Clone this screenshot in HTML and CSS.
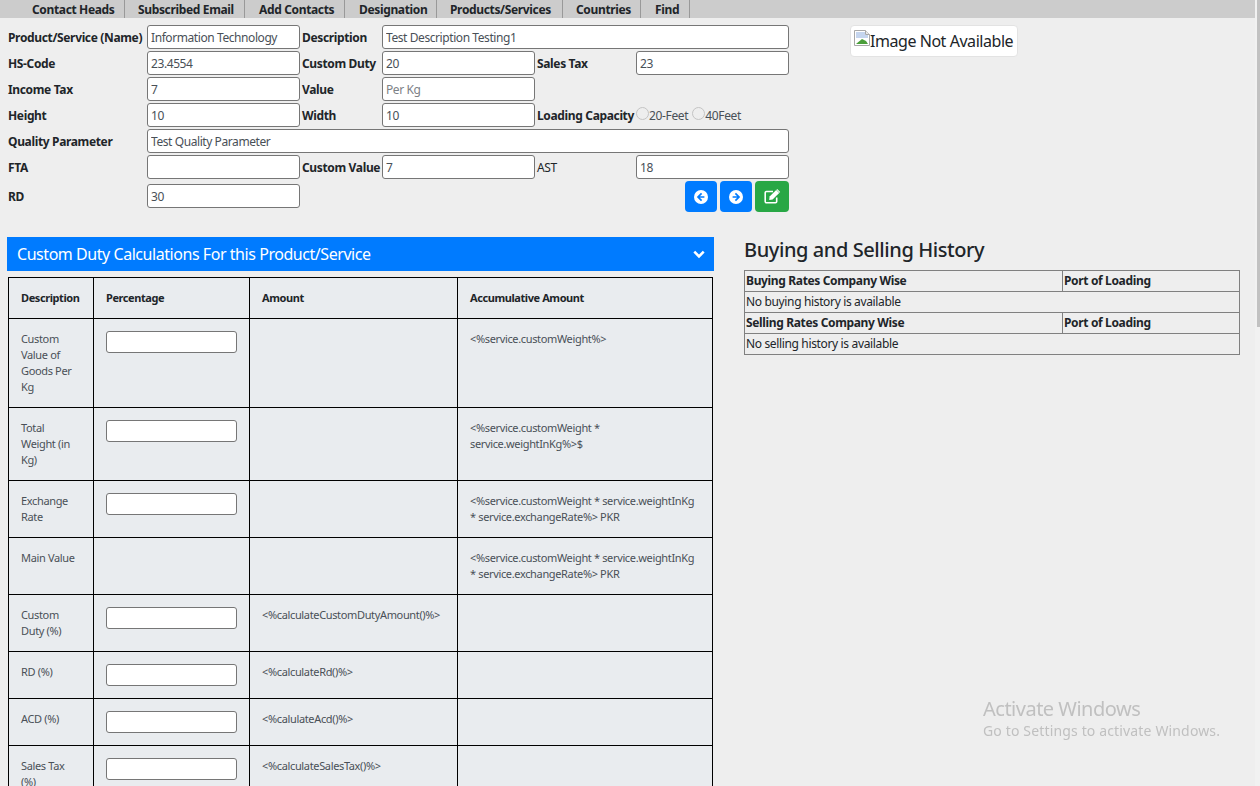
FILE: index.html
```html
<!DOCTYPE html>
<html lang="en">
<head>
    <meta charset="UTF-8">
    <meta name="viewport" content="width=device-width, initial-scale=1.0">
    <title>Product / Service</title>
    <link rel="stylesheet" href="styles.css">
</head>
<body>
    <nav class="tabs">
        <a class="tab tab-contact">Contact Heads</a>
        <a class="tab tab-email">Subscribed Email</a>
        <a class="tab tab-add">Add Contacts</a>
        <a class="tab tab-designation">Designation</a>
        <a class="tab tab-products">Products/Services</a>
        <a class="tab tab-countries">Countries</a>
        <a class="tab tab-find">Find</a>
    </nav>

    <section class="top">
        <form class="product-form">
            <label class="lbl">Product/Service (Name)</label>
            <input class="field" type="text" value="Information Technology">
            <label class="lbl">Description</label>
            <input class="field span-3" type="text" value="Test Description Testing1">

            <label class="lbl">HS-Code</label>
            <input class="field" type="text" value="23.4554">
            <label class="lbl">Custom Duty</label>
            <input class="field" type="text" value="20">
            <label class="lbl">Sales Tax</label>
            <input class="field" type="text" value="23">

            <label class="lbl">Income Tax</label>
            <input class="field" type="text" value="7">
            <label class="lbl">Value</label>
            <input class="field" type="text" placeholder="Per Kg">
            <span class="span-2"></span>

            <label class="lbl">Height</label>
            <input class="field" type="text" value="10">
            <label class="lbl">Width</label>
            <input class="field" type="text" value="10">
            <div class="capacity span-2">
                <label class="lbl">Loading Capacity</label>
                <span class="radio"></span><span class="radio-text">20-Feet</span>
                <span class="radio radio-second"></span><span class="radio-text">40Feet</span>
            </div>

            <label class="lbl">Quality Parameter</label>
            <input class="field span-5" type="text" value="Test Quality Parameter">

            <label class="lbl">FTA</label>
            <input class="field" type="text">
            <label class="lbl">Custom Value</label>
            <input class="field" type="text" value="7">
            <label class="lbl lbl-plain">AST</label>
            <input class="field" type="text" value="18">

            <label class="lbl lbl-rd">RD</label>
            <input class="field field-rd" type="text" value="30">
            <div class="actions">
                <button class="btn btn-blue" type="button">
                    <svg width="14" height="14" viewBox="0 0 14 14"><circle cx="7" cy="7" r="7" fill="#fff"/><path d="M7.600 3.400 4 7l3.600 3.600M4.400 7h6" fill="none" stroke="#007bff" stroke-width="1.700"/></svg>
                </button>
                <button class="btn btn-blue" type="button">
                    <svg width="14" height="14" viewBox="0 0 14 14"><circle cx="7" cy="7" r="7" fill="#fff"/><path d="M6.400 3.400 10 7l-3.600 3.600M9.600 7h-6" fill="none" stroke="#007bff" stroke-width="1.700"/></svg>
                </button>
                <button class="btn btn-green" type="button">
                    <svg width="17" height="15" viewBox="0 0 17 15"><path d="M9 2.500H2.500A1.200 1.200 0 0 0 1.200 3.700v8.900a1.200 1.200 0 0 0 1.300 1.200h9a1.200 1.200 0 0 0 1.200-1.200V8.500" fill="none" stroke="#fff" stroke-width="1.600"/><path d="M5.600 7.600 12.200 1l3 3-6.600 6.600-3.400.4z" fill="#fff"/><path d="M13.200 0l3 3-.7.700-3-3z" fill="#fff"/></svg>
                </button>
            </div>
        </form>

        <div class="image-box">
            <svg class="broken" width="16" height="16" viewBox="0 0 16 16"><path d="M.5.5h11l4 4v11H.5z" fill="#fff" stroke="#a8a8a8"/><path d="M2 2h9v3h3v3H2z" fill="#c5d5ee"/><path d="M2 14l6-5 4 2 2 3z" fill="#4a9e3a"/><path d="M11.500.5v4h4" fill="#e8e8e8" stroke="#a8a8a8"/></svg><span>Image Not Available</span>
        </div>
    </section>

    <section class="bottom">
        <div class="duty">
            <div class="duty-head">
                <span>Custom Duty Calculations For this Product/Service</span>
                <svg width="12" height="9" viewBox="0 0 12 9"><path d="M1.300 1.700 6 6.400l4.700-4.700" fill="none" stroke="#fff" stroke-width="2.600"/></svg>
            </div>
            <table class="duty-table">
                <colgroup>
                    <col class="c1"><col class="c2"><col class="c3"><col class="c4">
                </colgroup>
                <thead>
                    <tr>
                        <th>Description</th>
                        <th>Percentage</th>
                        <th>Amount</th>
                        <th>Accumulative Amount</th>
                    </tr>
                </thead>
                <tbody>
                    <tr>
                        <td>Custom<br>Value of<br>Goods Per<br>Kg</td>
                        <td><input class="pct" type="text"></td>
                        <td></td>
                        <td>&lt;%service.customWeight%&gt;</td>
                    </tr>
                    <tr>
                        <td>Total<br>Weight (in<br>Kg)</td>
                        <td><input class="pct" type="text"></td>
                        <td></td>
                        <td>&lt;%service.customWeight *<br>service.weightInKg%&gt;$</td>
                    </tr>
                    <tr>
                        <td>Exchange<br>Rate</td>
                        <td><input class="pct" type="text"></td>
                        <td></td>
                        <td>&lt;%service.customWeight * service.weightInKg<br>* service.exchangeRate%&gt; PKR</td>
                    </tr>
                    <tr>
                        <td>Main Value<br>&nbsp;</td>
                        <td></td>
                        <td></td>
                        <td>&lt;%service.customWeight * service.weightInKg<br>* service.exchangeRate%&gt; PKR</td>
                    </tr>
                    <tr>
                        <td>Custom<br>Duty (%)</td>
                        <td><input class="pct" type="text"></td>
                        <td>&lt;%calculateCustomDutyAmount()%&gt;</td>
                        <td></td>
                    </tr>
                    <tr>
                        <td>RD (%)</td>
                        <td><input class="pct" type="text"></td>
                        <td>&lt;%calculateRd()%&gt;</td>
                        <td></td>
                    </tr>
                    <tr>
                        <td>ACD (%)</td>
                        <td><input class="pct" type="text"></td>
                        <td>&lt;%calulateAcd()%&gt;</td>
                        <td></td>
                    </tr>
                    <tr>
                        <td>Sales Tax<br>(%)</td>
                        <td><input class="pct" type="text"></td>
                        <td>&lt;%calculateSalesTax()%&gt;</td>
                        <td></td>
                    </tr>
                </tbody>
            </table>
        </div>

        <div class="history">
            <h2>Buying and Selling History</h2>
            <table class="history-table">
                <tr>
                    <th class="h-first">Buying Rates Company Wise</th>
                    <th>Port of Loading</th>
                </tr>
                <tr><td colspan="2">No buying history is available</td></tr>
                <tr>
                    <th class="h-first">Selling Rates Company Wise</th>
                    <th>Port of Loading</th>
                </tr>
                <tr><td colspan="2">No selling history is available</td></tr>
            </table>
        </div>
    </section>

    <div class="scrollbar"><div class="thumb"></div></div>

    <div class="watermark">
        <div class="wm-title">Activate Windows</div>
        <div class="wm-sub">Go to Settings to activate Windows.</div>
    </div>
</body>
</html>
```

FILE: styles.css
```css
/* General */
html, body {
    height: 786px;
    overflow: hidden;
}

body {
    margin: 0;
    background-color: #eee;
    color: #212529;
    font-family: "Noto Sans", "Open Sans", sans-serif;
    font-size: 12px;
    letter-spacing: -0.35px;
    line-height: 16px;
}

/* Top tabs */
.tabs {
    display: flex;
    height: 18px;
    width: 1255px;
    padding-left: 7px;
    box-sizing: border-box;
    background-color: #ccc;
}

.tab {
    display: block;
    box-sizing: border-box;
    padding-left: 25px;
    border-right: 1px solid #999;
    font-weight: 700;
    line-height: 19px;
    white-space: nowrap;
}

.tab-contact { width: 118px; }
.tab-email { width: 120px; padding-left: 13px; }
.tab-add { width: 100px; padding-left: 14px; }
.tab-designation { width: 92px; padding-left: 14px; }
.tab-products { width: 126px; padding-left: 13px; }
.tab-countries { width: 78px; padding-left: 13px; }
.tab-find { width: 49px; padding-left: 14px; }

/* Product form */
.top {
    display: flex;
    align-items: flex-start;
    padding: 7px 0 0 8px;
}

.product-form {
    display: grid;
    grid-template-columns: 139px 155px 80px 155px 99px 153px;
    grid-template-rows: repeat(6, 24px) 31px;
    row-gap: 2px;
    align-items: center;
}

.lbl {
    margin-top: 2px;
    font-weight: 700;
    white-space: nowrap;
}

.lbl-plain {
    font-weight: 400;
}

.lbl-rd {
    margin-top: 0;
}

.field {
    box-sizing: border-box;
    width: 153px;
    height: 24px;
    padding: 0 3px;
    border: 1px solid #767676;
    border-radius: 3px;
    background: #fff;
    color: #495057;
    font: inherit;
    letter-spacing: -0.42px;
}

.field::placeholder {
    color: #7d8186;
}

.field-rd {
    margin-bottom: 1px;
}

.span-3 {
    grid-column: span 3;
    width: 100%;
}

.span-5 {
    grid-column: span 5;
    width: 100%;
}

.span-2 {
    grid-column: span 2;
}

.capacity {
    display: flex;
    align-items: center;
    white-space: nowrap;
}

.capacity .lbl {
    margin-top: 0;
    padding-top: 1px;
}

.radio {
    width: 11px;
    height: 11px;
    margin: 0 0 3px 2px;
    border: 1px solid #c4c4c4;
    border-radius: 50%;
}

.radio-second {
    margin-left: 4px;
}

.radio-text {
    padding-top: 1px;
    color: #495057;
}

.actions {
    grid-column: span 4;
    display: flex;
    justify-content: flex-end;
    gap: 3px;
}

.btn {
    display: flex;
    align-items: center;
    justify-content: center;
    width: 32px;
    height: 31px;
    padding: 0;
    border: none;
    border-radius: 4px;
}

.btn-blue {
    background-color: #007bff;
}

.btn-green {
    width: 34px;
    background-color: #28a745;
}

/* Broken image placeholder */
.image-box {
    display: flex;
    align-items: center;
    box-sizing: border-box;
    width: 168px;
    height: 32px;
    margin-left: 61px;
    padding: 0 3px 1px 3px;
    background: #fff;
    border: 1px solid #e3e3e3;
    border-radius: 4px;
    font-size: 16px;
    letter-spacing: -0.45px;
    white-space: nowrap;
}

.broken {
    flex: none;
    margin-top: -5px;
}

/* Lower section */
.bottom {
    display: flex;
    align-items: flex-start;
    margin-top: 25px;
    padding-left: 7px;
}

.duty {
    flex: none;
    width: 707px;
}

.duty-head {
    display: flex;
    align-items: center;
    justify-content: space-between;
    height: 34px;
    padding: 0 9px 0 10px;
    box-sizing: border-box;
    background-color: #007bff;
    color: #fff;
    font-size: 16px;
    letter-spacing: -0.45px;
}

.duty-table {
    width: 704px;
    margin: 6px 0 0 1px;
    table-layout: fixed;
    border-collapse: collapse;
    background-color: #e9ecef;
    font-size: 11px;
    letter-spacing: -0.35px;
}

.c1 { width: 85px; }
.c2 { width: 156px; }
.c3 { width: 208px; }
.c4 { width: 255px; }

.duty-table th,
.duty-table td {
    padding: 12px;
    border: 1px solid #000;
    text-align: left;
    vertical-align: top;
    white-space: nowrap;
}

.duty-table th {
    letter-spacing: -0.42px;
}

.duty-table td {
    color: #495057;
}

.pct {
    display: block;
    box-sizing: border-box;
    width: 131px;
    height: 22px;
    border: 1px solid #767676;
    border-radius: 3px;
    background: #fff;
}

/* History */
.history {
    flex: none;
    width: 496px;
    margin: 1px 0 0 30px;
}

.history h2 {
    margin: 0 0 8px;
    font-size: 20px;
    font-weight: 500;
    line-height: 24px;
    letter-spacing: -0.42px;
}

.history-table {
    width: 100%;
    box-sizing: border-box;
    border-collapse: collapse;
    border: 1px solid #333;
}

.history-table th,
.history-table td {
    height: 20px;
    padding: 0 1px;
    border: 1px solid #808080;
    text-align: left;
    font-weight: 400;
}

.history-table th {
    font-weight: 700;
}

.h-first {
    width: 315px;
}

/* Overlays */
.scrollbar {
    position: fixed;
    top: 0;
    right: 0;
    width: 5px;
    height: 786px;
    background: #f1f1f1;
}

.thumb {
    width: 3px;
    height: 327px;
    margin-left: 2px;
    background: #c1c1c1;
}

.watermark {
    position: fixed;
    left: 983px;
    top: 697px;
    color: #c0c0c0;
    letter-spacing: 0;
}

.wm-title {
    font-size: 20px;
    line-height: 24px;
    letter-spacing: -0.5px;
}

.wm-sub {
    margin-top: 1px;
    font-size: 14px;
    line-height: 18px;
    letter-spacing: 0.15px;
}
```
